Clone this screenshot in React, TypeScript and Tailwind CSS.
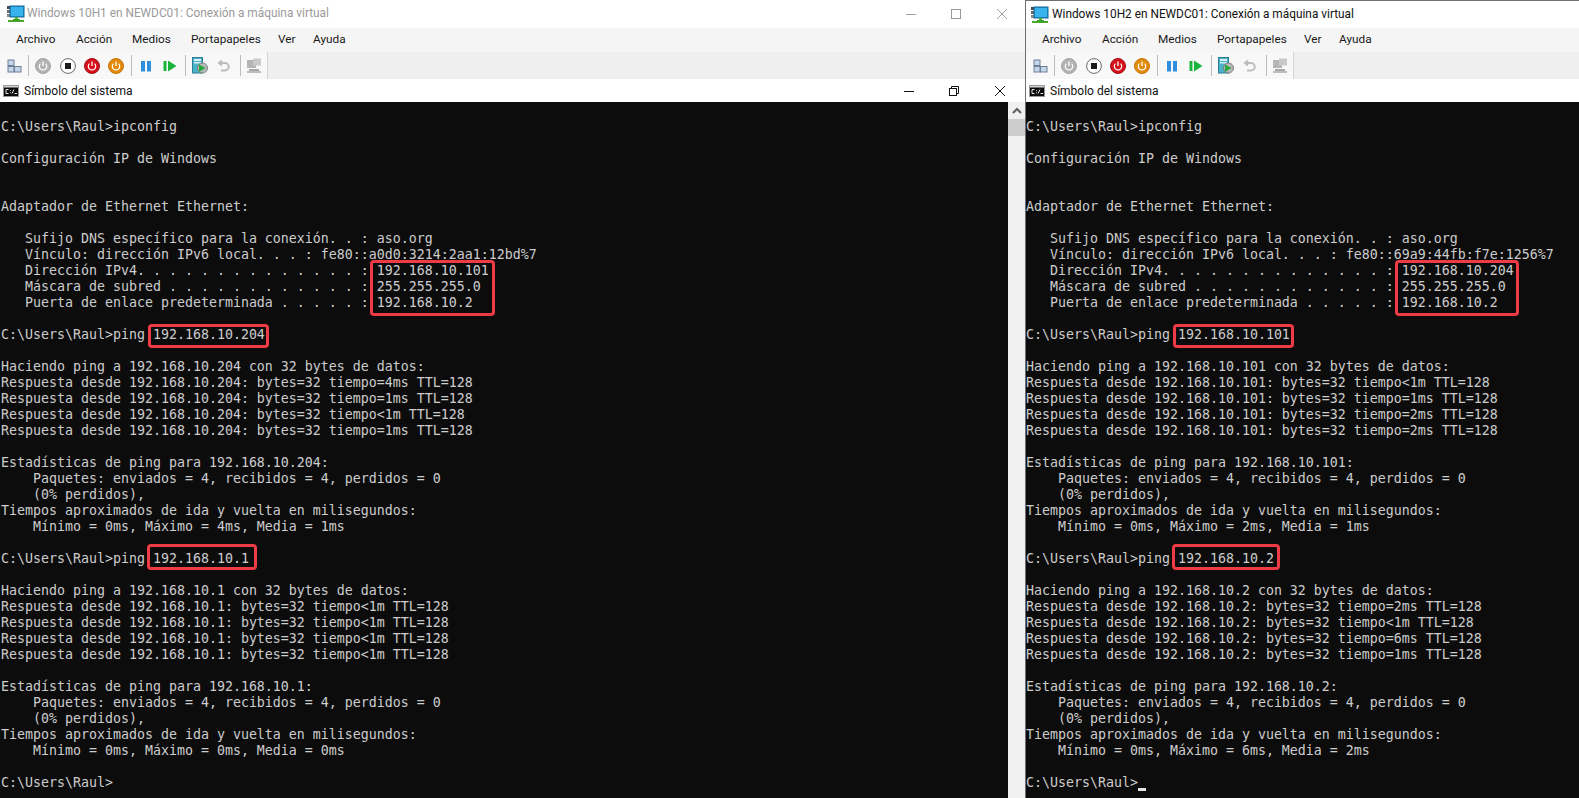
import React from "react";

const resp = (ip: string, vals: string[]) =>
  vals.map((v) => `Respuesta desde ${ip}: bytes=32 ${v} TTL=128`);

const block = (ip: string, vals: string[], max: string, avg: string, min = "0ms") => [
  `Haciendo ping a ${ip} con 32 bytes de datos:`,
  ...resp(ip, vals),
  "",
  `Estadísticas de ping para ${ip}:`,
  "    Paquetes: enviados = 4, recibidos = 4, perdidos = 0",
  "    (0% perdidos),",
  "Tiempos aproximados de ida y vuelta en milisegundos:",
  `    Mínimo = ${min}, Máximo = ${max}, Media = ${avg}`,
  "",
];

const session = (
  link: string,
  own: string,
  peer: string,
  vals1: string[],
  max1: string,
  avg1: string,
  gw: string,
  vals2: string[],
  max2: string,
  avg2: string,
) => [
  "",
  "C:\\Users\\Raul>ipconfig",
  "",
  "Configuración IP de Windows",
  "",
  "",
  "Adaptador de Ethernet Ethernet:",
  "",
  "   Sufijo DNS específico para la conexión. . : aso.org",
  `   Vínculo: dirección IPv6 local. . . : ${link}`,
  `   Dirección IPv4. . . . . . . . . . . . . . : ${own}`,
  "   Máscara de subred . . . . . . . . . . . . : 255.255.255.0",
  "   Puerta de enlace predeterminada . . . . . : 192.168.10.2",
  "",
  `C:\\Users\\Raul>ping ${peer}`,
  "",
  ...block(peer, vals1, max1, avg1),
  `C:\\Users\\Raul>ping ${gw}`,
  "",
  ...block(gw, vals2, max2, avg2),
  "C:\\Users\\Raul>",
];

const leftLines = session(
  "fe80::a0d0:3214:2aa1:12bd%7",
  "192.168.10.101",
  "192.168.10.204",
  ["tiempo=4ms", "tiempo=1ms", "tiempo<1m", "tiempo=1ms"],
  "4ms",
  "1ms",
  "192.168.10.1",
  ["tiempo<1m", "tiempo<1m", "tiempo<1m", "tiempo<1m"],
  "0ms",
  "0ms",
);

const rightLines = session(
  "fe80::69a9:44fb:f7e:1256%7",
  "192.168.10.204",
  "192.168.10.101",
  ["tiempo<1m", "tiempo=1ms", "tiempo=2ms", "tiempo=2ms"],
  "2ms",
  "1ms",
  "192.168.10.2",
  ["tiempo=2ms", "tiempo<1m", "tiempo=6ms", "tiempo=1ms"],
  "6ms",
  "2ms",
);

const VmIcon = () => (
  <svg width="18" height="18" viewBox="0 0 18 18" className="shrink-0">
    <rect x="0" y="1" width="5" height="3" fill="#4a4a4a" />
    <rect x="0" y="5" width="5" height="3" fill="#6b6b6b" />
    <rect x="0" y="9" width="5" height="3" fill="#8a8a8a" />
    <rect x="3" y="1" width="14" height="11" fill="#1f9bdf" stroke="#15638f" strokeWidth="1" />
    <rect x="4" y="2" width="12" height="9" fill="#39b3ee" />
    <rect x="8" y="12" width="3" height="3" fill="#4caf2e" />
    <rect x="1" y="15" width="16" height="2" fill="#48a92a" />
    <rect x="6" y="14" width="7" height="2" fill="#3fa028" />
  </svg>
);

const CmdIcon = () => (
  <svg width="16" height="12" viewBox="0 0 16 12" className="shrink-0">
    <rect x="0.5" y="0.5" width="15" height="11" fill="#0c0c0c" stroke="#9a9a9a" />
    <rect x="1" y="1" width="14" height="1.5" fill="#d8d8d8" />
    <path d="M5.5 4.5H3v4h2.5M7.5 5.2v.8M7.5 7.4v.8M9 8.5l2-4M11.5 8.5h2.5" fill="none" stroke="#e8e8e8" strokeWidth="1" />
  </svg>
);

const Sep = () => <div className="w-px h-[21px] bg-[#bcbcbc] shrink-0" />;

const Slot = ({ children }: { children: React.ReactNode }) => (
  <div className="w-6 h-6 flex items-center justify-center shrink-0">{children}</div>
);

const Power = ({ bg, ring }: { bg: string; ring: string }) => (
  <svg width="16" height="16" viewBox="0 0 16 16">
    <circle cx="8" cy="8" r="7.5" fill={bg} stroke={ring} strokeWidth="1" />
    <path d="M5.4 5.6a3.7 3.7 0 1 0 5.2 0" fill="none" stroke="#fff" strokeWidth="1.2" />
    <path d="M8 3.6v4.4" stroke="#fff" strokeWidth="1.3" />
  </svg>
);

const Toolbar = () => (
  <div className="h-[27px] bg-[#efefef] flex">
    <div className="w-[268px] bg-[#f8f8f8] flex items-center pl-[2px] border-r border-[#d4d4d4]">
      <Slot>
        <svg width="15" height="14" viewBox="0 0 15 14">
          <rect x="1" y="1" width="6" height="5.5" fill="#c5d6ea" stroke="#6d7f96" />
          <rect x="1" y="7.5" width="6" height="5.5" fill="#c5d6ea" stroke="#6d7f96" />
          <rect x="7.5" y="7.5" width="6.5" height="5.5" fill="#c5d6ea" stroke="#6d7f96" />
        </svg>
      </Slot>
      <div className="ml-[2px] mr-[2px]"><Sep /></div>
      <Slot><Power bg="#b3b3b3" ring="#a5a5a5" /></Slot>
      <div className="ml-px">
        <Slot>
          <svg width="16" height="16" viewBox="0 0 16 16">
            <circle cx="8" cy="8" r="7.4" fill="#fff" stroke="#6b6b6b" strokeWidth="1" />
            <rect x="5" y="5" width="6" height="6" fill="#1a1a1a" />
          </svg>
        </Slot>
      </div>
      <Slot><Power bg="#d5121b" ring="#a30d14" /></Slot>
      <Slot><Power bg="#e28a0b" ring="#c5760a" /></Slot>
      <div className="ml-[3px] mr-[2px]"><Sep /></div>
      <Slot>
        <svg width="12" height="12" viewBox="0 0 12 12">
          <rect x="1" y="1" width="4" height="10.5" fill="#2f8fdc" />
          <rect x="7" y="1" width="4" height="10.5" fill="#2f8fdc" />
        </svg>
      </Slot>
      <Slot>
        <svg width="14" height="12" viewBox="0 0 14 12">
          <rect x="0.5" y="1" width="3" height="10" fill="#19b43a" />
          <path d="M5 0.5 13.5 6 5 11.5Z" fill="#19b43a" />
        </svg>
      </Slot>
      <div className="ml-[3px] mr-[2px]"><Sep /></div>
      <Slot>
        <svg width="16" height="17" viewBox="0 0 16 17">
          <rect x="0.5" y="0.5" width="10" height="15.5" fill="#4bb3c9" stroke="#2a7f96" />
          <rect x="2" y="2" width="7" height="2" fill="#d6f0f5" />
          <rect x="2" y="5" width="7" height="1.5" fill="#d6f0f5" />
          <circle cx="10.5" cy="11" r="5" fill="#b8b8b8" stroke="#7d7d7d" />
          <path d="M7 7.5 13.5 11 7 15Z" fill="#25a83c" />
        </svg>
      </Slot>
      <Slot>
        <svg width="14" height="15" viewBox="0 0 14 15">
          <path d="M5 2.5 2 5l3 2.5" fill="none" stroke="#bdbdbd" strokeWidth="2" />
          <path d="M2.5 5H8a3.7 3.7 0 0 1 0 7.5H4" fill="none" stroke="#bdbdbd" strokeWidth="2" />
        </svg>
      </Slot>
      <div className="ml-[4px] mr-[1px]"><Sep /></div>
      <Slot>
        <svg width="16" height="16" viewBox="0 0 16 16">
          <rect x="1" y="2" width="9" height="8" fill="#b5b5b5" />
          <rect x="7" y="0.5" width="8" height="7" fill="#c9c9c9" />
          <rect x="3" y="11" width="10" height="2" fill="#a8a8a8" />
          <rect x="1" y="13" width="14" height="2" fill="#bdbdbd" />
        </svg>
      </Slot>
    </div>
  </div>
);

const Menu = () => (
  <div className="h-6 bg-[#f5f5f5] flex items-center pl-4 text-[11.8px] text-[#1a1a1a]">
    <span className="w-[60px]">Archivo</span>
    <span className="w-[56px]">Acción</span>
    <span className="w-[59px]">Medios</span>
    <span className="w-[87px]">Portapapeles</span>
    <span className="w-[35px]">Ver</span>
    <span>Ayuda</span>
  </div>
);

const Box = ({ className }: { className: string }) => (
  <div className={`absolute border-[3px] border-[#ef3b45] rounded-[4px] pointer-events-none ${className}`} />
);

const Terminal = ({ lines, cursor }: { lines: string[]; cursor?: boolean }) => (
  <pre className="font-['DejaVu_Sans_Mono',monospace] text-[13.29px] leading-4 text-[#cccccc] h-full overflow-hidden">
    {lines.map((l, i) => (
      <div key={i} className="h-4 whitespace-pre">
        {l}
        {cursor && i === lines.length - 1 ? (
          <span className="inline-block w-2 h-[3px] bg-[#e6e6e6] align-[-4px]" />
        ) : null}
      </div>
    ))}
  </pre>
);

export default function App() {
  return (
    <div className="w-[1579px] h-[798px] overflow-hidden flex bg-white font-['Roboto','Open_Sans',sans-serif]">
      {/* left window */}
      <div className="w-[1025px] shrink-0 flex flex-col h-full">
        <div className="h-7 flex items-center pl-[7px] bg-white">
          <VmIcon />
          <span className="ml-[2px] text-[11.85px] text-[#9a9a9a] flex-1">
            Windows 10H1 en NEWDC01: Conexión a máquina virtual
          </span>
          <div className="flex items-center text-[#9b9b9b] shrink-0">
            <svg width="12" height="12" viewBox="0 0 12 12" className="mr-[33px]">
              <path d="M1 6.5h10" stroke="#a0a0a0" />
            </svg>
            <svg width="12" height="12" viewBox="0 0 12 12" className="mr-[34px]">
              <rect x="1.5" y="1.5" width="9" height="9" fill="none" stroke="#9a9a9a" />
            </svg>
            <svg width="12" height="12" viewBox="0 0 12 12" className="mr-[17px]">
              <path d="M1 1l10 10M11 1 1 11" stroke="#a0a0a0" />
            </svg>
          </div>
        </div>
        <Menu />
        <Toolbar />
        <div className="h-[23px] flex items-center pl-[3px] bg-white">
          <CmdIcon />
          <span className="ml-[5px] text-[12px] text-[#111]">Símbolo del sistema</span>
          <div className="ml-auto flex items-center shrink-0">
            <svg width="12" height="12" viewBox="0 0 12 12" className="mr-[33px]">
              <path d="M1 6.5h10" stroke="#111" />
            </svg>
            <svg width="12" height="12" viewBox="0 0 12 12" className="mr-[34px]">
              <rect x="1.5" y="3.5" width="7" height="7" fill="none" stroke="#111" />
              <path d="M3.5 3.5v-2h7v7h-2" fill="none" stroke="#111" />
            </svg>
            <svg width="12" height="12" viewBox="0 0 12 12" className="mr-[19px]">
              <path d="M1 1l10 10M11 1 1 11" stroke="#111" />
            </svg>
          </div>
        </div>
        <div className="flex-1 flex min-h-0 pt-px bg-[#0c0c0c]">
          <div className="relative w-[1008px] pl-px shrink-0">
            <Terminal lines={leftLines} />
            <Box className="left-[370px] top-[157px] w-[125px] h-[56px]" />
            <Box className="left-[148px] top-[221px] w-[121px] h-[24px]" />
            <Box className="left-[147px] top-[441px] w-[110px] h-[26px]" />
          </div>
          <div className="w-[17px] bg-[#f0f0f0] flex flex-col items-center shrink-0 -mt-px">
            <div className="h-[17px] flex items-center justify-center">
              <svg width="10" height="7" viewBox="0 0 10 7">
                <path d="M1 6 5 2l4 4" fill="none" stroke="#606060" strokeWidth="2" />
              </svg>
            </div>
            <div className="w-full h-[17px] bg-[#cdcdcd]" />
          </div>
        </div>
      </div>
      <div className="w-px bg-[#6e6e6e] shrink-0" />
      {/* right window */}
      <div className="flex-1 flex flex-col h-full min-w-0">
        <div className="h-7 flex items-center pl-[5px] bg-white border-t border-[#6e6e6e]">
          <VmIcon />
          <span className="ml-[3px] text-[11.85px] text-[#111]">
            Windows 10H2 en NEWDC01: Conexión a máquina virtual
          </span>
        </div>
        <Menu />
        <Toolbar />
        <div className="h-[23px] flex items-center pl-[3px] bg-white">
          <CmdIcon />
          <span className="ml-[5px] text-[12px] text-[#111]">Símbolo del sistema</span>
        </div>
        <div className="relative flex-1 min-h-0 pt-px bg-[#0c0c0c]">
          <Terminal lines={rightLines} cursor />
          <Box className="left-[369px] top-[158px] w-[124px] h-[56px]" />
          <Box className="left-[147px] top-[222px] w-[121px] h-[24px]" />
          <Box className="left-[146px] top-[442px] w-[108px] h-[26px]" />
        </div>
      </div>
    </div>
  );
}
